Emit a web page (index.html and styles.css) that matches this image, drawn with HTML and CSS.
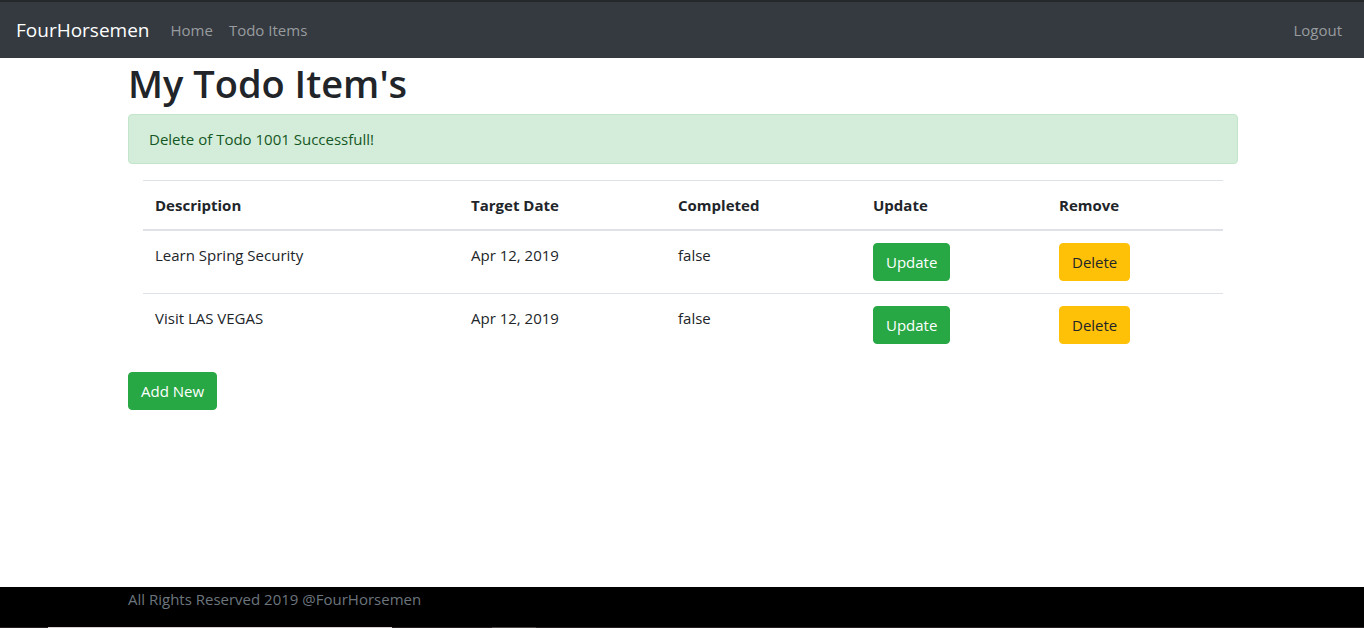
FILE: index.html
```html
<!DOCTYPE html>
<html lang="en">
<head>
<meta charset="utf-8">
<title>My Todo Item's</title>
<meta name="viewport" content="width=device-width, initial-scale=1">
<link rel="stylesheet" href="styles.css">
</head>
<body>
<nav class="navbar">
  <a class="brand" href="#">FourHorsemen</a>
  <ul class="nav-list">
    <li><a class="nav-link" href="#">Home</a></li>
    <li><a class="nav-link" href="#">Todo Items</a></li>
  </ul>
  <ul class="nav-list nav-end">
    <li><a class="nav-link" href="#">Logout</a></li>
  </ul>
</nav>
<main class="container">
  <h1 class="title">My Todo Item's</h1>
  <div class="alert" role="status">Delete of Todo 1001 Successfull!</div>
  <div class="table-wrap">
    <table class="table">
      <colgroup>
        <col class="col-description"><col class="col-date"><col class="col-completed"><col class="col-update"><col class="col-remove">
      </colgroup>
      <thead>
        <tr><th>Description</th><th>Target Date</th><th>Completed</th><th>Update</th><th>Remove</th></tr>
      </thead>
      <tbody>
        <tr>
          <td>Learn Spring Security</td><td>Apr 12, 2019</td><td>false</td>
          <td><a class="btn btn-success" href="#">Update</a></td>
          <td><a class="btn btn-warning" href="#">Delete</a></td>
        </tr>
        <tr>
          <td>Visit LAS VEGAS</td><td>Apr 12, 2019</td><td>false</td>
          <td><a class="btn btn-success" href="#">Update</a></td>
          <td><a class="btn btn-warning" href="#">Delete</a></td>
        </tr>
      </tbody>
    </table>
  </div>
  <a class="btn btn-success" href="#">Add New</a>
</main>
<footer class="footer">
  <div class="container"><span class="copyright">All Rights Reserved 2019 @FourHorsemen</span></div>
  <div class="edge"><div class="edge-light"></div><div class="edge-dim"></div></div>
</footer>
</body>
</html>
```
FILE: styles.css
```css
* { box-sizing: border-box; }

body {
  display: flex;
  flex-direction: column;
  min-height: 100vh;
  margin: 0;
  background: #fff;
  color: #212529;
  font-family: "Segoe UI", "Open Sans", "Noto Sans", sans-serif;
  font-size: 15px;
  line-height: 24px;
}

a { text-decoration: none; }

.navbar {
  display: flex;
  align-items: center;
  padding: 8px 14px 8px 16px;
  background: #343a40;
  border-top: 2px solid #25282b;
}

.brand {
  margin-right: 13px;
  color: #fff;
  font-size: 19px;
  line-height: 30px;
}

.nav-list {
  display: flex;
  margin: 0;
  padding: 0;
  list-style: none;
}

.nav-end { margin-left: auto; }

.nav-link {
  display: block;
  padding: 8px;
  color: #999c9f;
}

.container {
  width: 100%;
  max-width: 1140px;
  margin: 0 auto;
  padding: 0 14px 0 16px;
}

main.container { flex: 1; }

.title {
  margin: 1px 0 7px;
  font-size: 38px;
  font-weight: 600;
  line-height: 48px;
}

.alert {
  margin-bottom: 16px;
  padding: 12px 20px;
  color: #155724;
  background: #d4edda;
  border: 1px solid #c3e6cb;
  border-radius: 4px;
}

.table-wrap { padding: 0 15px; }

.table {
  width: 100%;
  margin-bottom: 16px;
  table-layout: fixed;
  border-collapse: separate;
  border-spacing: 0;
}

.col-description { width: 316px; }
.col-date { width: 207px; }
.col-completed { width: 195px; }
.col-update { width: 186px; }
.col-remove { width: 176px; }

.table th,
.table td {
  padding: 12px;
  text-align: left;
  vertical-align: top;
}

.table th {
  border-top: 1px solid #dee2e6;
  border-bottom: 2px solid #dee2e6;
  font-weight: 700;
}

.table tr + tr td { border-top: 1px solid #dee2e6; }

.btn {
  display: inline-block;
  padding: 6px 12px;
  border: 1px solid;
  border-radius: 4px;
  vertical-align: top;
}

.btn-success {
  color: #fff;
  background: #28a745;
  border-color: #28a745;
}

.btn-warning {
  color: #212529;
  background: #ffc107;
  border-color: #ffc107;
}

.footer {
  display: flex;
  flex-direction: column;
  height: 41px;
  background: #000;
}

.copyright { color: #6c757d; }

.edge {
  display: flex;
  height: 1px;
  margin-top: auto;
  padding-left: 48px;
  background: #231f20;
}

.edge-light {
  width: 344px;
  background: #d8d0d0;
}

.edge-dim {
  width: 44px;
  margin-left: 100px;
  background: #4a4646;
}
```
